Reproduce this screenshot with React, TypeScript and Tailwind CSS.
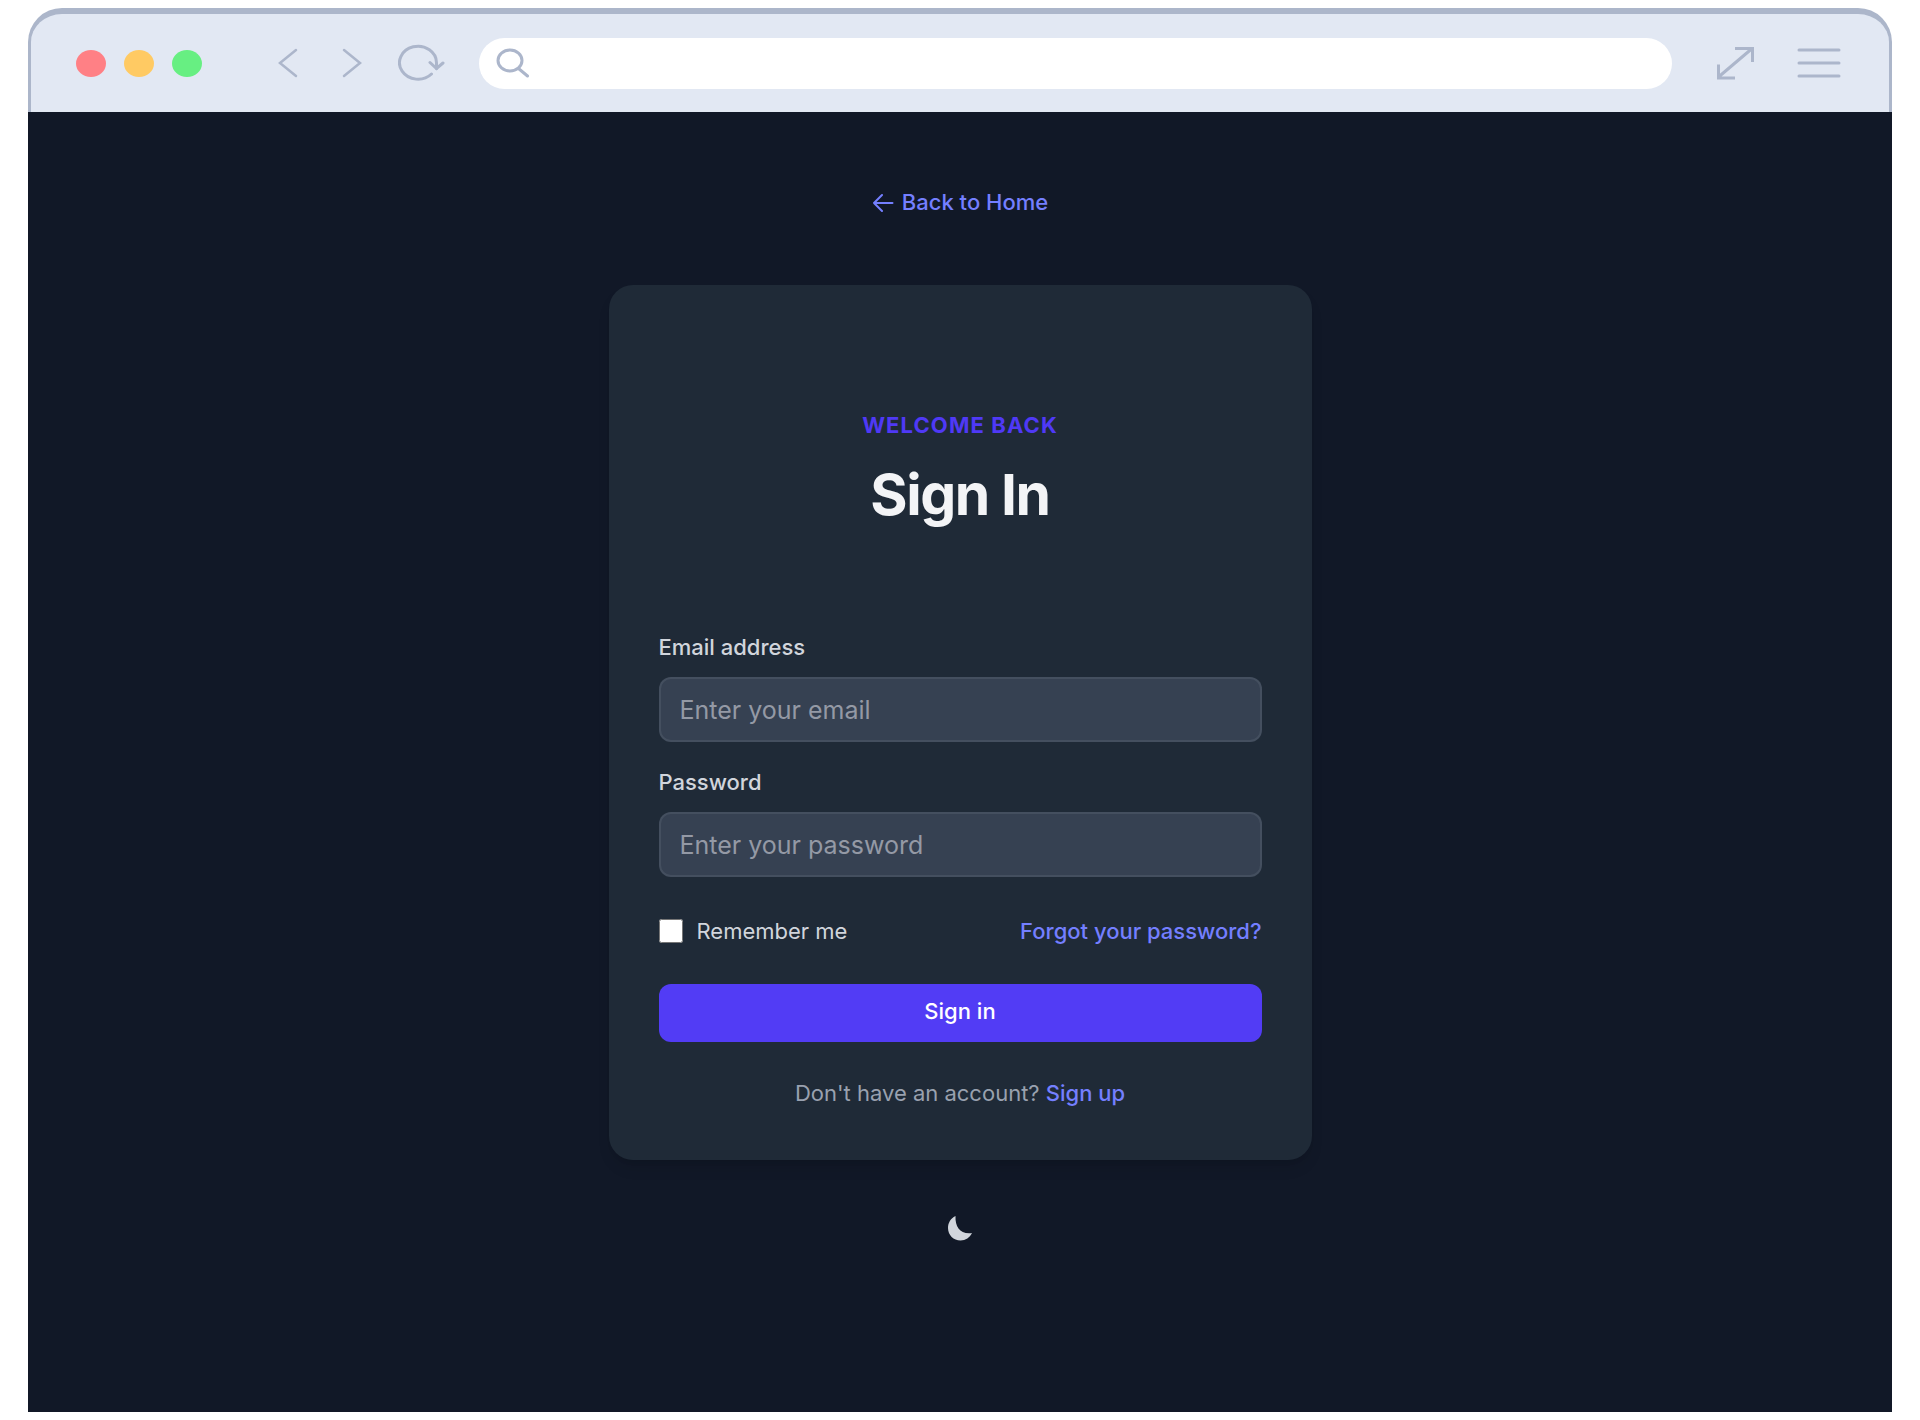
import { useState } from "react";
import type { ReactNode } from "react";

type FieldProps = {
  id: string;
  label: string;
  type: "email" | "password";
  placeholder: string;
};

type IconButtonProps = {
  label: string;
  className?: string;
  children: ReactNode;
};

function IconButton({ label, className = "", children }: IconButtonProps) {
  return (
    <button type="button" aria-label={label} className={`shrink-0 text-[#acb6cb] ${className}`}>
      {children}
    </button>
  );
}

function BrowserBar() {
  return (
    <header className="flex h-[104px] items-center rounded-t-[34px] border-x-[3px] border-t-[6px] border-[#acb6ca] bg-[#e2e8f3] pr-12 pl-[45px]">
      <div className="flex shrink-0 gap-[18px]">
        <span className="h-[27px] w-[30px] rounded-[50%] bg-[#ff8085]" />
        <span className="h-[27px] w-[30px] rounded-[50%] bg-[#ffca63]" />
        <span className="h-[27px] w-[30px] rounded-[50%] bg-[#67ef82]" />
      </div>

      <IconButton label="Back" className="ml-[76px]">
        <svg width="20" height="30" fill="none" stroke="currentColor" strokeWidth="2.500" strokeLinecap="round">
          <path d="M18 2L2 15l16 13" />
        </svg>
      </IconButton>
      <IconButton label="Forward" className="ml-11">
        <svg width="20" height="30" fill="none" stroke="currentColor" strokeWidth="2.500" strokeLinecap="round">
          <path d="M2 2l16 13L2 28" />
        </svg>
      </IconButton>
      <IconButton label="Reload" className="ml-9">
        <svg width="47" height="38" fill="none" stroke="currentColor" strokeWidth="3" strokeLinecap="round">
          <path d="M33.500 30A18.500 16.500 0 1 1 38.500 19V24.500" />
          <path d="M32 18.500l6.500 6 6.500-5.500" />
        </svg>
      </IconButton>

      <div className="ml-[34px] flex h-[51px] min-w-0 flex-1 items-center rounded-full bg-white pl-[17px]">
        <svg className="shrink-0 text-[#acb6cb]" width="34" height="30" fill="none" stroke="currentColor" strokeWidth="3" strokeLinecap="round">
          <ellipse cx="14" cy="12.500" rx="12" ry="10.500" />
          <path d="M22.500 20.500l9 7.500" />
        </svg>
        <input type="text" aria-label="Address" className="min-w-0 flex-1 bg-transparent px-4 outline-none" />
      </div>

      <IconButton label="Full screen" className="ml-[43px]">
        <svg width="40" height="36" fill="none" stroke="currentColor" strokeWidth="3">
          <path d="M3.500 32L36.500 4M20 3.500h17.500V17M3.500 19.500V33H20" />
        </svg>
      </IconButton>
      <IconButton label="Menu" className="ml-[42px]">
        <svg width="44" height="30" fill="none" stroke="currentColor" strokeWidth="3" strokeLinecap="round">
          <path d="M2 2h40M2 15h40M2 28h40" />
        </svg>
      </IconButton>
    </header>
  );
}

function Field({ id, label, type, placeholder }: FieldProps) {
  return (
    <div>
      <label htmlFor={id} className="block font-medium text-gray-300">
        {label}
      </label>
      <input
        id={id}
        type={type}
        placeholder={placeholder}
        className="mt-4 h-[65px] w-full rounded-xl border-2 border-gray-600/70 bg-[#364152] px-[19px] text-[25px] text-white placeholder:text-[#9499a5]"
      />
    </div>
  );
}

export default function App() {
  const [remember, setRemember] = useState(false);

  return (
    <div className="flex min-h-screen flex-col bg-white px-7 py-2 font-['Inter',sans-serif]">
      <BrowserBar />

      <main className="flex flex-1 flex-col items-center bg-[#111827] px-6 pt-[76px] pb-20 text-[22px] leading-7">
        <a href="#" className="flex items-center gap-2 font-medium text-[#747fff]">
          <svg width="22" height="20" fill="none" stroke="currentColor" strokeWidth="2" strokeLinecap="round" strokeLinejoin="round">
            <path d="M20.500 11H2M10 3L2 11l8 8" />
          </svg>
          Back to Home
        </a>

        <section className="mt-[69px] w-full max-w-[703px] rounded-3xl bg-[#1f2a37] px-[50px] pt-[126px] pb-[53px] shadow-lg">
          <p className="text-center font-bold tracking-wider text-[#4f39f6] uppercase">Welcome Back</p>
          <h1 className="mt-[26px] text-center text-[57px] leading-[60px] font-bold tracking-tight text-gray-100">
            Sign In
          </h1>

          <form className="mt-[108px]" onSubmit={(e) => e.preventDefault()}>
            <div className="space-y-[26px]">
              <Field id="email" label="Email address" type="email" placeholder="Enter your email" />
              <Field id="password" label="Password" type="password" placeholder="Enter your password" />
            </div>

            <div className="mt-10 flex items-center justify-between">
              <label className="flex items-center gap-[14px] text-gray-300">
                <input
                  type="checkbox"
                  checked={remember}
                  onChange={(e) => setRemember(e.target.checked)}
                  className="h-6 w-6"
                />
                Remember me
              </label>
              <a href="#" className="font-medium text-[#747fff]">
                Forgot your password?
              </a>
            </div>

            <button type="submit" className="mt-[39px] flex h-[58px] w-full items-center justify-center rounded-xl bg-[#523cf5] pb-1 font-medium text-white">
              Sign in
            </button>
          </form>

          <p className="mt-[37px] text-center text-gray-400">
            Don't have an account?{" "}
            <a href="#" className="font-medium text-[#747fff]">
              Sign up
            </a>
          </p>
        </section>

        <button type="button" aria-label="Toggle dark mode" className="mt-[54px] text-gray-300">
          <svg width="26" height="28" fill="currentColor">
            <path d="M8.500 2C3.500 4.500 1 9 1 14c0 7 5.500 12.500 12.500 12.500 5 0 9.500-3 11.500-7.500C13.500 20.500 8 13.500 8.500 2z" />
          </svg>
        </button>
      </main>
    </div>
  );
}
